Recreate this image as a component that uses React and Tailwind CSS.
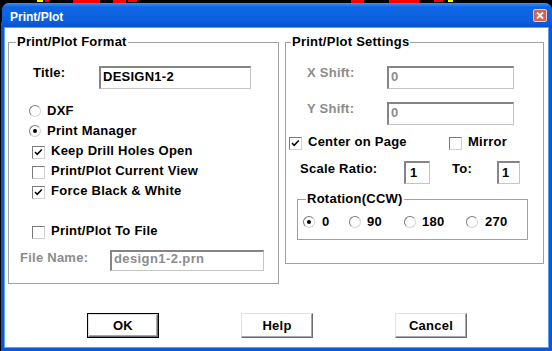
import React from "react";

const F = "font-['Liberation_Sans',Arial,sans-serif]";

function Radio({ checked }) {
  return (
    <span className="relative mt-[2px] flex h-[12px] w-[12px] shrink-0 items-center justify-center rounded-full border border-t-[#7a7a7a] border-l-[#7a7a7a] border-r-[#d4d4d4] border-b-[#d4d4d4] bg-white">
      {checked && <span className="h-[4px] w-[4px] rounded-full bg-black" />}
    </span>
  );
}

function Check({ checked }) {
  return (
    <span className="mt-[3px] flex h-[13px] w-[13px] shrink-0 items-center justify-center border border-t-[#7a7a7a] border-l-[#7a7a7a] border-r-[#d0d0d0] border-b-[#d0d0d0] bg-white">
      {checked && (
        <svg width="11" height="11" viewBox="0 0 11 11">
          <polyline points="2,5 4.2,7.3 8.8,2.6" fill="none" stroke="#000" strokeWidth="1.5" />
        </svg>
      )}
    </span>
  );
}

function Field({ w, h, value, disabled, className = "" }) {
  return (
    <div
      className={`flex shrink-0 border-t-2 border-l-2 border-r border-b border-t-[#858585] border-l-[#858585] border-r-[#c4c4c4] border-b-[#c4c4c4] bg-white pl-[2px] leading-[16px] ${disabled ? "text-[#8c8c8c]" : "text-black"} ${className}`}
      style={{ width: w, height: h }}
    >
      {value}
    </div>
  );
}

function Btn({ children, def }) {
  return (
    <div
      className={`flex h-[25px] w-[72px] items-center justify-center bg-white ${def ? "border border-black" : ""}`}
    >
      <div className="flex h-full w-full items-center justify-center border border-t-[#e2e2e2] border-l-[#e2e2e2] border-r-[#6c6c6c] border-b-[#6c6c6c] shadow-[inset_-1px_-1px_#a8a8a8]">
        {children}
      </div>
    </div>
  );
}

function Group({ label, className = "", labelLeft = "left-[7px]", children }) {
  return (
    <div className={`relative shrink-0 border border-[#a0a0a0] ${className}`}>
      <div className={`absolute -top-[9px] ${labelLeft} bg-white px-[1px] leading-[16px]`}>{label}</div>
      {children}
    </div>
  );
}

export default function App() {
  return (
    <div className={`relative h-[351px] w-[552px] overflow-hidden bg-black ${F} text-[13px] font-bold tracking-[0.25px]`}>
      {/* desktop scraps behind the dialog */}
      <div className="absolute left-[37px] top-0 h-[2px] w-[6px] bg-[#ffff00]" />
      <div className="absolute left-[45px] top-0 h-[2px] w-[4px] bg-[#ff0000]" />
      <div className="absolute left-[73px] top-0 h-[3px] w-[27px] bg-[#ff0000]" />
      <div className="absolute left-[113px] top-0 h-[3px] w-[13px] bg-[#ff0000]" />
      <div className="absolute left-[128px] top-0 h-[2px] w-[9px] bg-[#ff0000]" />
      <div className="absolute left-[351px] top-0 h-[3px] w-[13px] bg-[#ff0000]" />
      <div className="absolute left-[389px] top-0 h-[3px] w-[30px] bg-[#ff0000]" />
      <div className="absolute left-[434px] top-0 h-[2px] w-[9px] bg-[#ff0000]" />
      <div className="absolute left-[448px] top-0 h-[2px] w-[5px] bg-[#ffff00]" />
      <div className="absolute left-[1px] top-[22px] h-[329px] w-[1px] bg-[#ff0000]" />

      <div className="ml-[2px] mt-[3px] flex h-[348px] w-[550px] flex-col rounded-t-[7px] bg-[#0a5ad8]">
        {/* title bar */}
        <div className="flex h-[25px] items-start justify-between rounded-t-[7px] bg-[linear-gradient(#3e8ff5_0px,#0f66e4_4px,#0a5fde_18px,#0550cc_25px)] pl-[8px] pr-[5px]">
          <div className="mt-[6px] text-[12px] leading-[16px] tracking-normal text-white">Print/Plot</div>
          <div className="mt-[6px] flex h-[13px] w-[14px] items-center justify-center rounded-[2px] border border-[#f4c8c0] bg-[#d8604c]">
            <svg width="10" height="9" viewBox="0 0 10 9">
              <path d="M2 1.5 L8 7.5 M8 1.5 L2 7.5" stroke="#fff" strokeWidth="1.8" />
            </svg>
          </div>
        </div>

        {/* body */}
        <div className="ml-[3px] flex h-[319px] w-[543px] flex-col bg-white pl-[3px] pt-[14px] shadow-[0_0_0_1px_#5fa2f4]">
          <div className="flex gap-[6px]">
            {/* left group */}
            <Group label="Print/Plot Format" className="h-[242px] w-[271px]">
              <div className="flex flex-col">
                <div className="mt-[22px] flex items-start pl-[24px]">
                  <div className="w-[66px] leading-[16px]">Title:</div>
                  <Field w={152} h={23} value={<span className="mt-[1px]">DESIGN1-2</span>} className="mt-[1px]" />
                </div>

                <div className="mt-[14px] flex flex-col gap-[4px] pl-[20px]">
                  <div className="flex h-[16px] items-start gap-[6px] leading-[16px]">
                    <Radio />
                    <span>DXF</span>
                  </div>
                  <div className="flex h-[16px] items-start gap-[6px] leading-[16px]">
                    <Radio checked />
                    <span>Print Manager</span>
                  </div>
                </div>

                <div className="mt-[4px] flex flex-col gap-[4px] pl-[23px]">
                  <div className="flex h-[16px] items-start gap-[6px] leading-[16px]">
                    <Check checked />
                    <span>Keep Drill Holes Open</span>
                  </div>
                  <div className="flex h-[16px] items-start gap-[6px] leading-[16px]">
                    <Check />
                    <span>Print/Plot Current View</span>
                  </div>
                  <div className="flex h-[16px] items-start gap-[6px] leading-[16px]">
                    <Check checked />
                    <span>Force Black &amp; White</span>
                  </div>
                  <div className="mt-[20px] flex h-[16px] items-start gap-[6px] leading-[16px]">
                    <Check />
                    <span>Print/Plot To File</span>
                  </div>
                </div>

                <div className="mt-[11px] flex items-start pl-[11px]">
                  <div className="w-[90px] leading-[16px] text-[#8c8c8c]">File Name:</div>
                  <Field w={154} h={21} disabled value={<span className="-mt-[1px] tracking-[0.4px]">design1-2.prn</span>} />
                </div>
              </div>
            </Group>

            {/* right group */}
            <Group label="Print/Plot Settings" labelLeft="left-[5px]" className="h-[222px] w-[259px]">
              <div className="flex flex-col">
                <div className="mt-[22px] flex items-start pl-[21px]">
                  <div className="w-[80px] leading-[16px] text-[#8c8c8c]">X Shift:</div>
                  <Field w={127} h={23} disabled value={<span className="mt-[1px]">0</span>} className="mt-[1px]" />
                </div>
                <div className="mt-[12px] flex items-start pl-[21px]">
                  <div className="w-[80px] leading-[16px] text-[#8c8c8c]">Y Shift:</div>
                  <Field w={127} h={23} disabled value={<span className="mt-[1px]">0</span>} className="mt-[1px]" />
                </div>

                <div className="mt-[9px] flex items-start pl-[3px] leading-[16px]">
                  <div className="flex w-[160px] items-start gap-[6px]">
                    <Check checked />
                    <span>Center on Page</span>
                  </div>
                  <div className="flex items-start gap-[6px]">
                    <Check />
                    <span>Mirror</span>
                  </div>
                </div>

                <div className="mt-[11px] flex items-start pl-[14px] leading-[16px]">
                  <div className="w-[104px]">Scale Ratio:</div>
                  <Field w={26} h={23} value={<span className="mt-[2px] pl-[2px]">1</span>} />
                  <div className="ml-[22px] w-[45px]">To:</div>
                  <Field w={23} h={23} value={<span className="mt-[2px] pl-[1px]">1</span>} />
                </div>

                <Group label="Rotation(CCW)" labelLeft="left-[8px]" className="ml-[11px] mt-[15px] h-[41px] w-[231px]">
                  <div className="mt-[14px] flex items-start pl-[5px] leading-[16px]">
                    <div className="flex w-[46px] items-start gap-[7px]">
                      <Radio checked />
                      <span>0</span>
                    </div>
                    <div className="flex w-[55px] items-start gap-[6px]">
                      <Radio />
                      <span>90</span>
                    </div>
                    <div className="flex w-[62px] items-start gap-[6px]">
                      <Radio />
                      <span>180</span>
                    </div>
                    <div className="flex items-start gap-[7px]">
                      <Radio />
                      <span>270</span>
                    </div>
                  </div>
                </Group>
              </div>
            </Group>
          </div>

          {/* buttons */}
          <div className="mt-[29px] flex gap-[82px] pl-[79px] leading-[16px]">
            <Btn def>OK</Btn>
            <Btn>Help</Btn>
            <Btn>Cancel</Btn>
          </div>
        </div>
      </div>
    </div>
  );
}
